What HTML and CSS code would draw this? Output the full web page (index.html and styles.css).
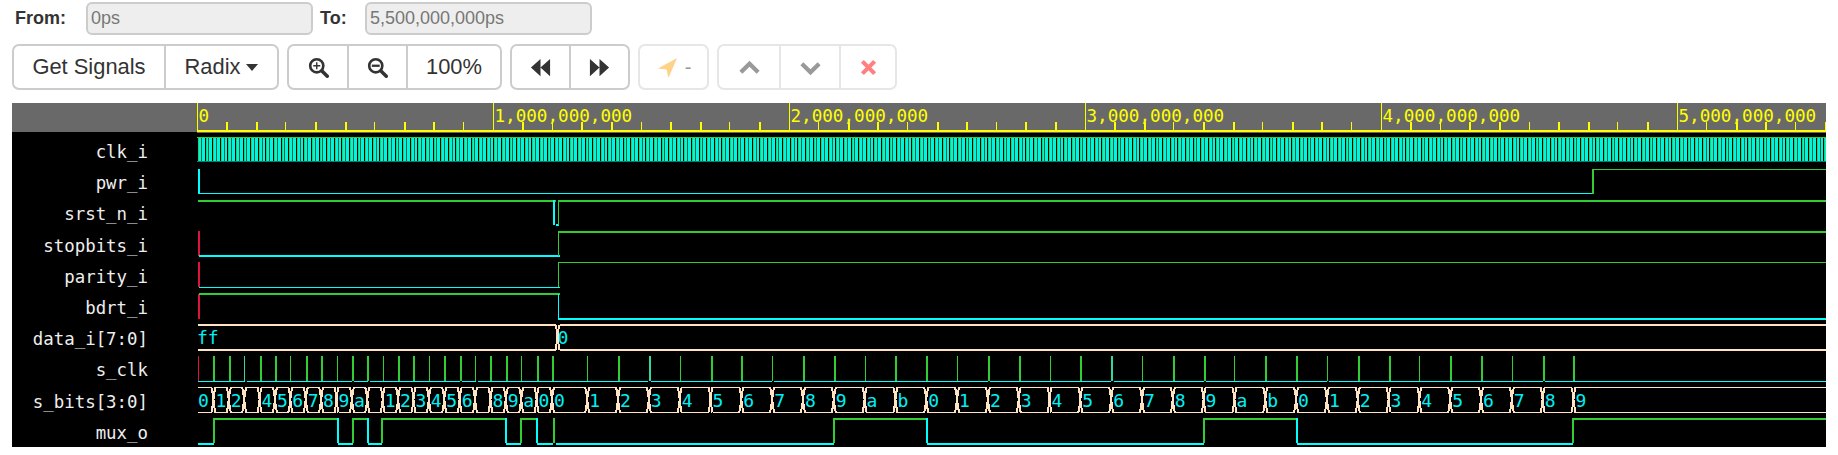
FILE: index.html
```html
<!DOCTYPE html>
<html lang="en">
<head>
<meta charset="utf-8">
<title>Waveform</title>
<link rel="stylesheet" href="styles.css">
</head>
<body>
<div class="range">
  <label class="range-label from">From:</label>
  <input class="range-input" disabled value="0ps">
  <label class="range-label to">To:</label>
  <input class="range-input" disabled value="5,500,000,000ps">
</div>
<div class="toolbar">
  <div class="group">
    <button class="btn w-get">Get Signals</button>
    <button class="btn w-radix">Radix <span class="caret"></span></button>
  </div>
  <div class="group">
    <button class="btn w-zoom-in"><svg class="icon" viewBox="0 0 24 24"><circle cx="10" cy="10" r="7.5" fill="none" stroke="#333" stroke-width="3"/><path d="M16 16l6 6" stroke="#333" stroke-width="4" stroke-linecap="round"/><path d="M10 6v8M6 10h8" stroke="#333" stroke-width="1.6"/></svg></button>
    <button class="btn w-zoom-out"><svg class="icon" viewBox="0 0 24 24"><circle cx="10" cy="10" r="7.5" fill="none" stroke="#333" stroke-width="3"/><path d="M16 16l6 6" stroke="#333" stroke-width="4" stroke-linecap="round"/><path d="M5.5 10h9" stroke="#333" stroke-width="2.6"/></svg></button>
    <button class="btn w-pct">100%</button>
  </div>
  <div class="group">
    <button class="btn w-back"><svg class="icon icon-lg" viewBox="0 0 24 24"><path d="M12 3v18L2 12zM22 3v18L12 12z" fill="#333"/></svg></button>
    <button class="btn w-fwd"><svg class="icon icon-lg" viewBox="0 0 24 24"><path d="M2 3v18l10-9zM12 3v18l10-9z" fill="#333"/></svg></button>
  </div>
  <div class="group dim">
    <button class="btn w-nav"><svg class="icon icon-lg" viewBox="0 0 24 24"><path d="M22 2L2 13l9 1 2 9z" fill="#ffd28a"/></svg><span class="dash">-</span></button>
  </div>
  <div class="group dim">
    <button class="btn w-up"><svg class="icon icon-lg" viewBox="0 0 24 24"><path d="M3 17l9-9 9 9" fill="none" stroke="#999" stroke-width="4.4"/></svg></button>
    <button class="btn w-down"><svg class="icon icon-lg" viewBox="0 0 24 24"><path d="M3 8l9 9 9-9" fill="none" stroke="#999" stroke-width="4.4"/></svg></button>
    <button class="btn w-x"><svg class="icon" viewBox="0 0 24 24"><path d="M5 5l14 14M19 5L5 19" fill="none" stroke="#ff8080" stroke-width="4.8"/></svg></button>
  </div>
</div>
<div class="wave-panel">
  <div class="names">
    <div class="name">clk_i</div>
    <div class="name">pwr_i</div>
    <div class="name">srst_n_i</div>
    <div class="name">stopbits_i</div>
    <div class="name">parity_i</div>
    <div class="name">bdrt_i</div>
    <div class="name">data_i[7:0]</div>
    <div class="name">s_clk</div>
    <div class="name">s_bits[3:0]</div>
    <div class="name">mux_o</div>
  </div>
  <svg id="wave" class="wave" width="1629" height="344" viewBox="197 103 1629 344"></svg>
</div>
<script src="wave.js"></script>
</body>
</html>
```
FILE: styles.css
```css
* { box-sizing: border-box; }
html, body { margin: 0; padding: 0; background: #fff; }
body { font-family: "Liberation Sans", Arial, sans-serif; color: #333; height: 455px; overflow: hidden; }
.range { display: flex; align-items: center; height: 33px; margin-top: 2px; padding-left: 15px; }
.range-label { font-size: 18px; font-weight: 700; }
.from { width: 71px; }
.to { width: 45px; margin-left: 7px; }
.range-input { width: 227px; height: 33px; border: 2px solid #ccc; border-radius: 6px; background: #eee; color: #777; font: 18px "Liberation Sans", Arial, sans-serif; padding: 0 3px; }
.toolbar { display: flex; gap: 8px; margin: 9px 0 0 12px; height: 46px; }
.group { display: flex; border: 2px solid #ccc; border-radius: 7px; background: #fff; }
.group.dim { border-color: #e6e6e6; }
.btn { display: flex; align-items: center; justify-content: center; gap: 6px; height: 100%; padding: 0; margin: 0; border: 0; border-left: 2px solid #ccc; background: transparent; font: 21.9px "Liberation Sans", Arial, sans-serif; color: #333; }
.btn:first-child { border-left: 0; }
.dim .btn { border-left-color: #e6e6e6; }
.w-get { width: 150px; }
.w-radix { width: 113px; }
.w-zoom-in { width: 58px; }
.w-zoom-out { width: 59px; }
.w-pct { width: 94px; }
.w-back { width: 57px; }
.w-fwd { width: 59px; }
.w-nav { width: 67px; color: #999; }
.w-up { width: 60px; }
.w-down { width: 60px; }
.w-x { width: 56px; }
.caret { width: 0; height: 0; border-left: 6px solid transparent; border-right: 6px solid transparent; border-top: 7px solid #333; }
.icon { width: 21px; height: 21px; display: block; }
.icon-lg { width: 23px; height: 23px; }
.dash { font-size: 20px; color: #999; }
.wave-panel { position: relative; display: flex; margin: 13px 0 0 12px; width: 1814px; height: 344px; background: #000; }
.names { width: 185px; flex: none; padding-top: 37px; background: linear-gradient(#696969 0 29px, #000 29px); }
.name { height: 31.2px; text-align: right; padding-right: 49px; color: #eee; font: 17.4px/25px "DejaVu Sans Mono", monospace; white-space: pre; }
.wave { display: block; flex: none; }
.wave text { font-family: "DejaVu Sans Mono", monospace; }
.ruler-label { fill: #ffff00; font-size: 17.6px; }
.bus-label { fill: #00f0f5; font-size: 18px; }
```
FILE: wave.js
```js
(function () {
  var NS = 'http://www.w3.org/2000/svg';
  var svg = document.getElementById('wave');
  var GREEN = '#32cd32', CYAN = '#00ffff', RED = '#dc143c', PEACH = '#ffe4c4', YEL = '#ffff00';
  function rect(x, y, w, h, fill) {
    var r = document.createElementNS(NS, 'rect');
    r.setAttribute('x', x); r.setAttribute('y', y); r.setAttribute('width', w); r.setAttribute('height', h); r.setAttribute('fill', fill);
    r.setAttribute('shape-rendering', 'crispEdges');
    svg.appendChild(r);
  }
  function line(pts, color, w) {
    var p = document.createElementNS(NS, 'polyline');
    p.setAttribute('points', pts.join(' ')); p.setAttribute('fill', 'none');
    p.setAttribute('stroke', color); p.setAttribute('stroke-width', w);
    p.setAttribute('shape-rendering', 'crispEdges');
    svg.appendChild(p);
  }
  function text(x, y, s, cls) {
    var t = document.createElementNS(NS, 'text');
    t.setAttribute('x', x); t.setAttribute('y', y); t.setAttribute('class', cls);
    t.textContent = s; svg.appendChild(t);
  }
  var R = 1826;

  // ruler
  rect(197, 103, R - 197, 29.5, '#696969');
  rect(197, 130, R - 197, 2, YEL);
  for (var i = 0; i * 29.6 + 197 < R; i++) {
    var x = Math.floor(197 + i * 29.6);
    if (i % 10 === 0) rect(x, 103, 1, 28, YEL);
    else rect(x, 122, i % 3 === 0 ? 1 : 2, 9, YEL);
  }
  ['0', '1,000,000,000', '2,000,000,000', '3,000,000,000', '4,000,000,000', '5,000,000,000'].forEach(function (s, k) {
    text(198.5 + k * 296, 122, s, 'ruler-label');
  });

  // clk_i
  rect(197, 137, R - 197, 25, '#00f5dc');
  var stripe = 0;
  for (var c = 197; c < R; c += 3.8, stripe++) {
    rect(Math.round(c), 137, 1, 25, stripe % 2 ? '#064' : '#000');
    if (stripe % 2 === 0) rect(Math.round(c) + 1, 137, 1, 25, '#22d070');
  }
  rect(197, 137, R - 197, 1, GREEN);
  rect(197, 161, R - 197, 1, '#00806f');

  // pwr_i
  rect(198, 169, 2, 25, CYAN); rect(198, 193, 1395, 1, CYAN);
  rect(1592, 169, 2, 25, GREEN); rect(1593, 169, R - 1593, 1, GREEN);

  // srst_n_i
  rect(198, 200, 358, 2, GREEN); rect(553, 200, 2, 25, CYAN); rect(556, 224, 3, 2, CYAN);
  rect(558, 200, 1, 25, GREEN); rect(558, 200, R - 558, 2, GREEN);

  // stopbits_i
  rect(198, 231, 2, 25, RED); rect(199, 255, 361, 2, CYAN);
  rect(558, 231, 1, 25, GREEN); rect(558, 231, R - 558, 2, GREEN);

  // parity_i
  rect(198, 262, 2, 25, RED); rect(199, 287, 361, 1, CYAN);
  rect(558, 262, 1, 25, GREEN); rect(558, 262, R - 558, 1, GREEN);

  // bdrt_i
  rect(198, 294, 2, 25, RED); rect(199, 293, 361, 2, GREEN);
  rect(558, 294, 1, 25, CYAN); rect(558, 318, R - 558, 2, CYAN);

  // buses: open rails joined by X crossings at each interior edge
  function bus(edges, top, bot, w) {
    var mid = (top + bot) / 2;
    for (var n = 0; n < edges.length - 1; n++) {
      var l = n === 0 ? edges[n] : edges[n] + 2;
      var r = n === edges.length - 2 ? edges[n + 1] : edges[n + 1] - 2;
      rect(l, top, r - l, w, PEACH);
      rect(l, bot, r - l, w, PEACH);
    }
    for (var e = 1; e < edges.length - 1; e++) {
      var xx = edges[e], o = w / 2;
      line([[xx - 2, top + o], [xx - 1, top + 5], [xx, mid], [xx - 1, bot - 5], [xx - 2, bot + o]].map(String), PEACH, 2);
      line([[xx + 2, top + o], [xx + 1, top + 5], [xx, mid], [xx + 1, bot - 5], [xx + 2, bot + o]].map(String), PEACH, 2);
    }
  }

  // data_i
  bus([198, 557.5, R], 324, 349, 2);
  text(197, 344, 'ff', 'bus-label');
  text(557.5, 344, '0', 'bus-label');

  // s_clk
  var ticks = [];
  for (var k = 0; k < 24; k++) ticks.push(198 + k * 15.39);
  for (var m = 1; m <= 33; m++) ticks.push(556.4 + m * 30.82);
  rect(198, 381, R - 198, 1, CYAN);
  [[245, 2], [352, 2], [368, 2], [460, 2], [476, 2], [648, 3], [772, 2], [988, 2], [1111, 3], [1204, 2], [1327, 2], [1543, 2]].forEach(function (g) { rect(g[0], 381, g[1], 1, '#000'); });
  ticks.forEach(function (t, i) {
    var xx = Math.round(t), wide = i % 3 !== 0;
    rect(xx, 356, wide ? 2 : 1, 25, i === 0 ? RED : (i === 3 || i === 26 || i === 41 ? '#2fd8a0' : GREEN));
  });

  // s_bits
  var edges = ticks.slice(1);
  bus([198].concat(edges, [R]), 387, 412, 1);
  var labels = ['0','1','2','','4','5','6','7','8','9','a','','1','2','3','4','5','6','','8','9','a','0','0','1','2','3','4','5','6','7','8','9','a','b','0','1','2','3','4','5','6','7','8','9','a','b','0','1','2','3','4','5','6','7','8','9'];
  var starts = [198].concat(edges);
  labels.forEach(function (s, i) { if (s) text(starts[i] + (i ? 2 : 0), 407, s, 'bus-label'); });

  // mux_o
  var segs = [[198, 214, 0], [214, 338, 1], [338, 353, 0], [353, 368, 1], [368, 382, 0], [382, 506, 1], [506, 521, 0], [521, 537, 1], [537, 553, 0], [556, 834, 0], [834, 927, 1], [927, 1204, 0], [1204, 1297, 1], [1297, 1573, 0], [1573, R, 1]];
  segs.forEach(function (s, i) {
    rect(s[0], s[2] ? 418 : 443, s[1] - s[0], 2, s[2] ? GREEN : CYAN);
    if (i > 0 && s[0] !== 556) rect(s[0] - 1, 418, 2, 25, s[2] ? GREEN : CYAN);
  });
  rect(553, 418, 2, 25, GREEN);
})();
```
